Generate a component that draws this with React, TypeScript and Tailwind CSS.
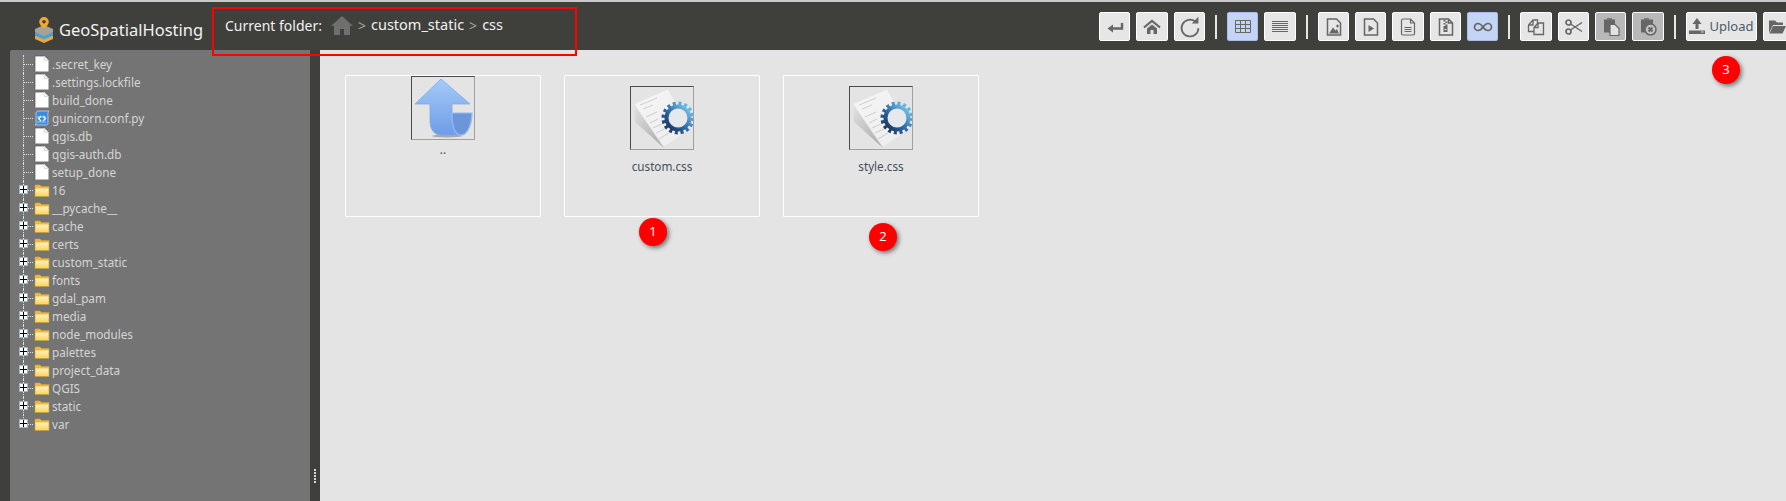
import React from 'react';

const files = ['.secret_key', '.settings.lockfile', 'build_done', 'gunicorn.conf.py', 'qgis.db', 'qgis-auth.db', 'setup_done'];
const folders = ['16', '__pycache__', 'cache', 'certs', 'custom_static', 'fonts', 'gdal_pam', 'media', 'node_modules', 'palettes', 'project_data', 'QGIS', 'static', 'var'];

const Ic = ({ children }: { children: React.ReactNode }) => (
  <svg viewBox="0 0 20 20" width="20" height="20" fill="none" stroke="#666" strokeWidth="1.5">
    {children}
  </svg>
);

const ToolButton = ({ w = 'w-[31px]', variant = 'normal', children }: { w?: string; variant?: 'normal' | 'active' | 'disabled'; children: React.ReactNode }) => (
  <button
    className={
      variant === 'active'
        ? `${w} h-[29px] shrink-0 flex items-center justify-center rounded-[2px] border border-[#a9bfe8] bg-[#c3d4f5]`
        : variant === 'disabled'
          ? `${w} h-[29px] shrink-0 flex items-center justify-center rounded-[2px] border border-white bg-[#b8b8b8]`
          : `${w} h-[29px] shrink-0 flex items-center justify-center rounded-[2px] border border-white bg-[#e6e6e6]`
    }
  >
    {children}
  </button>
);

const Sep = () => <div className="w-[2px] h-[24px] bg-[#e6e6e6] mx-[4px] shrink-0" />;

const PageIcon = () => (
  <svg width="16" height="18" viewBox="0 0 16 18" className="shrink-0">
    <path d="M1 1h9l4.500 4.500V16.500H1z" fill="#fff" />
    <path d="M1 16.500V1h9" fill="none" stroke="#555" strokeWidth="0.700" />
    <path d="M10 1v4.500h4.500" fill="#eee" stroke="#ccc" strokeWidth="0.600" />
  </svg>
);

const ScriptIcon = () => (
  <svg width="16" height="18" viewBox="0 0 16 18" className="shrink-0">
    <path d="M4 2h11c-1 1-1.400 3-1 5v7c0 1-.5 2-2 2H1c1-1 1.500-2 1-4V4c0-1 1-2 2-2z" fill="#3a8be0" stroke="#cfe4fa" strokeWidth="0.700" />
    <path d="M3 8h9M3 13h9" stroke="#9cc8f3" strokeWidth="1" />
    <path d="M7 7 4.500 9.500 7 12M9 7l2.500 2.500L9 12" stroke="#fff" strokeWidth="1.200" fill="none" />
  </svg>
);

const FolderIcon = () => (
  <svg width="16" height="16" viewBox="0 0 16 16" className="shrink-0">
    <defs>
      <linearGradient id="fold" x1="0" y1="0" x2="0" y2="1">
        <stop offset="0" stopColor="#fff4bf" />
        <stop offset="1" stopColor="#f9d65f" />
      </linearGradient>
    </defs>
    <path d="M1 3h5l1.500 1.500H15v10H1z" fill="#f0b93e" stroke="#d8a233" strokeWidth="0.500" />
    <path d="M1.500 6.500h13V14h-13z" fill="url(#fold)" />
  </svg>
);

const Expander = () => (
  <span className="absolute left-0 top-[4px] w-[9px] h-[9px] flex items-center justify-center border border-[#9db4cc] bg-white">
    <svg width="7" height="7" viewBox="0 0 7 7"><path d="M0 3.500h7M3.500 0v7" stroke="#000" strokeWidth="1" /></svg>
  </span>
);

const UpThumb = () => (
  <svg width="62" height="62" viewBox="0 0 62 62">
    <defs>
      <linearGradient id="up" x1="0" y1="0" x2="0" y2="1">
        <stop offset="0" stopColor="#a6cbf9" />
        <stop offset="1" stopColor="#6e9ce6" />
      </linearGradient>
    </defs>
    <ellipse cx="35" cy="59" rx="15" ry="1.500" fill="#aaa" />
    <path d="M29 2 3 27h15v17c0 8 4 14 11 14h20c-8 0-9-13-9-28v-3h18z" fill="url(#up)" stroke="#7fa8e8" strokeWidth="0.800" />
    <path d="M40 36h20c0 10-4 22-11 22s-9-10-9-22z" fill="#6c95da" stroke="#94bbf3" strokeWidth="1.200" />
  </svg>
);

const CssThumb = () => (
  <svg width="62" height="62" viewBox="0 0 62 62">
    <defs>
      <linearGradient id="shade" x1="0" y1="0" x2="1" y2="1">
        <stop offset="0" stopColor="#f6f6f6" />
        <stop offset="1" stopColor="#ececec" />
      </linearGradient>
      <linearGradient id="drop" x1="0" y1="0" x2="1" y2="1">
        <stop offset="0" stopColor="#e2e2e2" />
        <stop offset="1" stopColor="#a8a8a8" />
      </linearGradient>
      <linearGradient id="gear" x1="1" y1="0" x2="0" y2="1">
        <stop offset="0" stopColor="#7fd0f2" />
        <stop offset="0.550" stopColor="#2f6aa8" />
        <stop offset="1" stopColor="#172f52" />
      </linearGradient>
    </defs>
    <path d="M3 17 4 35l29 26z" fill="url(#drop)" />
    <path d="M3 17 37 2l23 40-27 18z" fill="url(#shade)" stroke="#dcdcdc" strokeWidth="0.500" />
    <g stroke="#bcbcbc" strokeWidth="0.700">
      <path d="M9 18l17-7M12 22l10-4M15 30l11-5M19 36l8-4M22 41l11-5M25 46l13-6M28 52l10-6" />
    </g>
    <circle cx="47" cy="31" r="14.500" fill="none" stroke="url(#gear)" strokeWidth="4" strokeDasharray="3 2.700" />
    <circle cx="47" cy="31" r="11.500" fill="#e6e9ec" stroke="url(#gear)" strokeWidth="4" />
  </svg>
);

const Thumb = ({ children }: { children: React.ReactNode }) => (
  <div className="w-[64px] h-[64px] shrink-0 flex items-center justify-center border border-t-[#4a4a4a] border-l-[#4a4a4a] border-r-[#a0a0a0] border-b-[#a0a0a0]">
    {children}
  </div>
);

const Card = ({ name, up, children }: { name: string; up?: boolean; children: React.ReactNode }) => (
  <div className={up ? 'w-[196px] h-[142px] shrink-0 flex flex-col items-center border border-white rounded-[1px]' : 'w-[196px] h-[142px] shrink-0 flex flex-col items-center border border-white rounded-[1px] pt-[10px]'}>
    <Thumb>{children}</Thumb>
    <div className={up ? 'mt-0 text-[11.7px] leading-[18px] text-[#44505c]' : 'mt-[7px] text-[11.7px] leading-[18px] text-[#44505c]'}>{name}</div>
  </div>
);

const Badge = ({ className, n }: { className: string; n: number }) => (
  <div className={`absolute w-[28px] h-[28px] rounded-full bg-[#fe0000] text-white text-[13px] flex items-center justify-center shadow-[2px_2px_4px_rgba(0,0,0,0.5)] ${className}`}>
    {n}
  </div>
);

export default function App() {
  return (
    <div className="relative w-[1786px] h-[501px] overflow-hidden bg-[#3f3f3b] font-['Noto_Sans',sans-serif]">
      <header className="h-[50px] border-t-2 border-[#c9c9c9] flex items-center overflow-hidden">
        <div className="w-[212px] shrink-0 flex items-center pl-[34px] pt-[8px]">
          <svg width="20" height="26" viewBox="0 0 20 26" className="shrink-0">
            <path d="M1 19l9-4 9 4v3l-9 4-9-4z" fill="#e9a93a" />
            <path d="M1 15.500l9-4 9 4v3l-9 4-9-4z" fill="#4f9fd6" />
            <path d="M1 12l9-4 9 4v3l-9 4-9-4z" fill="#a5a296" />
            <path d="M10 0a4.800 4.800 0 0 0-4.800 4.800C5.200 8 10 12 10 12s4.800-4 4.800-7.200A4.800 4.800 0 0 0 10 0z" fill="#f0a92e" />
            <circle cx="10" cy="4.800" r="1.800" fill="#3f3f3b" />
          </svg>
          <span className="ml-[5px] text-[16.500px] text-[#f2f2f2] whitespace-nowrap">GeoSpatialHosting</span>
        </div>
        <div className="w-[887px] shrink-0 flex items-center pl-[13px] pb-[2px] text-[14px] whitespace-nowrap">
          <span className="text-[#f2f2f2]">Current folder:</span>
          <svg width="22" height="21" viewBox="0 0 22 21" className="ml-[9px]">
            <path d="M11 1 0 11h3v9h6v-6h4v6h6v-9h3z" fill="#6f6f6f" />
          </svg>
          <span className="mx-[5px] text-[#a5a5a5]">&gt;</span>
          <span className="text-[14.500px] text-[#f2f2f2]">custom_static</span>
          <span className="mx-[5px] text-[#a5a5a5]">&gt;</span>
          <span className="text-[14.500px] text-[#f2f2f2]">css</span>
        </div>
        <div className="flex items-center gap-[6px] shrink-0 mt-[1px]">
          <ToolButton>
            <Ic><path d="M17 6v5.500H5" strokeWidth="2.400" /><path d="M8 7.500 2.500 11.500 8 15.500z" fill="#666" stroke="none" /></Ic>
          </ToolButton>
          <ToolButton w="w-[32px]">
            <Ic>
              <path d="M2 10.500 10 4l8 6.500" strokeWidth="2.200" />
              <path d="M5 11.500 10 7.500l5 4V17h-3.500v-4h-3v4H5z" fill="#666" stroke="none" />
            </Ic>
          </ToolButton>
          <ToolButton>
            <svg viewBox="0 0 20 20" width="24" height="24" fill="none" stroke="#666" strokeWidth="1.500">
              <path d="M14.500 5.500A7 7 0 1 0 17 11" />
              <path d="M11.500 7h5.500V1.500z" fill="#666" stroke="none" />
            </svg>
          </ToolButton>
          <Sep />
          <ToolButton variant="active">
            <Ic><path d="M2.500 3.500h15v12h-15zM2.500 7.500h15M2.500 11.500h15M7.500 3.500v12M12.500 3.500v12" strokeWidth="1" /></Ic>
          </ToolButton>
          <ToolButton w="w-[32px]">
            <Ic><path d="M2 4.500h16M2 6.500h16M2 8.500h16M2 10.500h16M2 12.500h16M2 14.500h16" strokeWidth="1" /></Ic>
          </ToolButton>
          <Sep />
          <ToolButton>
            <Ic>
              <path d="M3.500 2h9l4 4v12h-13z" />
              <path d="M5 16.500 9 10.500l2.500 3 1.500-1.500 2 4.500z" fill="#666" stroke="none" />
              <path d="M13.500 7.500v3M12 9h3" strokeWidth="1.200" />
            </Ic>
          </ToolButton>
          <ToolButton>
            <Ic>
              <path d="M3.500 2h9l4 4v12h-13z" />
              <path d="M7.500 8l5.500 3.500L7.500 15z" fill="#666" stroke="none" />
            </Ic>
          </ToolButton>
          <ToolButton w="w-[32px]">
            <Ic><path d="M3.500 3.500A1.500 1.500 0 0 1 5 2h7.500l4 4v10.500A1.500 1.500 0 0 1 15 18H5a1.500 1.500 0 0 1-1.500-1.500zM12.500 2v4h4M6.500 10.500h7M6.500 12.500h7M6.500 14.500h7" strokeWidth="1.200" /></Ic>
          </ToolButton>
          <ToolButton>
            <Ic>
              <path d="M3.500 2h9l4 4v12h-13zM12.500 2v4h4" />
              <path d="M7.500 3h2v1.500h-2zM9.500 4.500h2V6h-2zM7.500 6h2v1.500h-2zM9.500 7.500h2V9h-2zM7.500 9h4v6h-4z" fill="#666" stroke="none" />
              <path d="M8.500 12.500h2" stroke="#e6e6e6" strokeWidth="1" />
            </Ic>
          </ToolButton>
          <ToolButton variant="active">
            <Ic><path d="M10 10c-2-2.800-3.500-3.500-5-3.500a3.500 3.500 0 0 0 0 7c1.500 0 3-.7 5-3.500s3.500-3.500 5-3.500a3.500 3.500 0 0 1 0 7c-1.500 0-3-.7-5-3.500z" strokeWidth="1.700" /></Ic>
          </ToolButton>
          <Sep />
          <ToolButton w="w-[32px]">
            <Ic>
              <path d="M2.500 8 7 3h4.500v4.500M2.500 8v6.500H8M2.500 8H7V3" strokeWidth="1.300" />
              <path d="M8 10.500 12 6h5.500v11.500H8zM8 10.500h4V6" strokeWidth="1.300" />
            </Ic>
          </ToolButton>
          <ToolButton>
            <Ic>
              <circle cx="4.500" cy="5.500" r="2.500" strokeWidth="1.700" />
              <circle cx="4.500" cy="14.500" r="2.500" strokeWidth="1.700" />
              <path d="M6.500 7 18 14.500M6.500 13 18 5.500" strokeWidth="1.400" />
            </Ic>
          </ToolButton>
          <ToolButton variant="disabled">
            <Ic>
              <path d="M3 2.500h11v13H3z" fill="#666" stroke="none" />
              <path d="M6 1h5v2H6z" fill="#777" stroke="none" />
              <path d="M9 7.500h5l4 4v7H9z" fill="#e2e2e2" stroke="#666" strokeWidth="1.200" />
            </Ic>
          </ToolButton>
          <ToolButton w="w-[32px]" variant="disabled">
            <Ic>
              <path d="M3 2.500h12v13H3z" fill="#666" stroke="none" />
              <path d="M6 1h5v2H6z" fill="#777" stroke="none" />
              <circle cx="12.500" cy="12.500" r="5.500" fill="#c4c4c4" stroke="#666" strokeWidth="1.500" />
              <path d="M10.500 10.500l4 4M14.500 10.500l-4 4" strokeWidth="2" />
            </Ic>
          </ToolButton>
          <Sep />
          <ToolButton w="w-[71px]">
            <span className="flex items-center gap-[4px] text-[13px] text-[#4c5a68]">
              <svg width="16" height="17" viewBox="0 0 16 17" className="shrink-0">
                <path d="M8 0 3.500 6H6.500v5h3V6h3z" fill="#666" />
                <path d="M0 12.500h16V16H0z" fill="#666" />
                <path d="M12 14h2.500" stroke="#e6e6e6" strokeWidth="1" />
              </svg>
              Upload
            </span>
          </ToolButton>
          <ToolButton w="w-[28px]">
            <Ic>
              <path d="M2 3.500h6l2 2h6V8H6L2 16z" fill="#666" stroke="none" />
              <path d="M6 9h13l-3.500 7.500H2.500z" fill="#666" stroke="none" />
            </Ic>
          </ToolButton>
        </div>
      </header>

      <div className="flex h-[451px] pl-[10px]">
        <aside className="w-[300px] shrink-0 bg-[#747474] rounded-tl-[2px] pt-[5px] pl-[9px] text-[11.700px] leading-[18px] text-[#d4d4d4]">
          {files.map((f) => (
            <div key={f} className="h-[18px] flex items-center">
              <span className="relative w-[15px] h-[18px] shrink-0 flex items-center">
                <span className="absolute left-[4px] top-0 bottom-0 border-l border-dotted border-[#e2e2e2]" />
                <span className="ml-[5px] w-[9px] border-t border-dotted border-[#e2e2e2]" />
              </span>
              {f === 'gunicorn.conf.py' ? <ScriptIcon /> : <PageIcon />}
              <span className="ml-[2px] whitespace-nowrap">{f}</span>
            </div>
          ))}
          {folders.map((f, i) => (
            <div key={f} className="h-[18px] flex items-center">
              <span className="relative w-[15px] h-[18px] shrink-0 flex items-center">
                <span className={i === folders.length - 1 ? 'absolute left-[4px] top-0 h-[9px] border-l border-dotted border-[#e2e2e2]' : 'absolute left-[4px] top-0 bottom-0 border-l border-dotted border-[#e2e2e2]'} />
                <span className="ml-[9px] w-[5px] border-t border-dotted border-[#e2e2e2]" />
                <Expander />
              </span>
              <FolderIcon />
              <span className="ml-[2px] whitespace-nowrap">{f}</span>
            </div>
          ))}
        </aside>
        <div className="w-[10px] shrink-0 flex flex-col justify-end items-center pb-[18px] gap-[1px]">
          {[0, 1, 2, 3, 4].map((i) => (
            <span key={i} className="w-[2px] h-[2px] bg-[#d8d8d8]" />
          ))}
        </div>
        <main className="flex-1 bg-[#e4e4e4] pt-[25px] pl-[25px] flex gap-[23px] items-start">
          <Card name=".." up><UpThumb /></Card>
          <Card name="custom.css"><CssThumb /></Card>
          <Card name="style.css"><CssThumb /></Card>
        </main>
      </div>

      {/* annotations drawn over the screenshot */}
      <div className="absolute left-[212px] top-[7px] w-[365px] h-[49px] border-2 border-[#fe0000]" />
      <Badge className="left-[639px] top-[218px]" n={1} />
      <Badge className="left-[869px] top-[223px]" n={2} />
      <Badge className="left-[1712px] top-[56px]" n={3} />
    </div>
  );
}
